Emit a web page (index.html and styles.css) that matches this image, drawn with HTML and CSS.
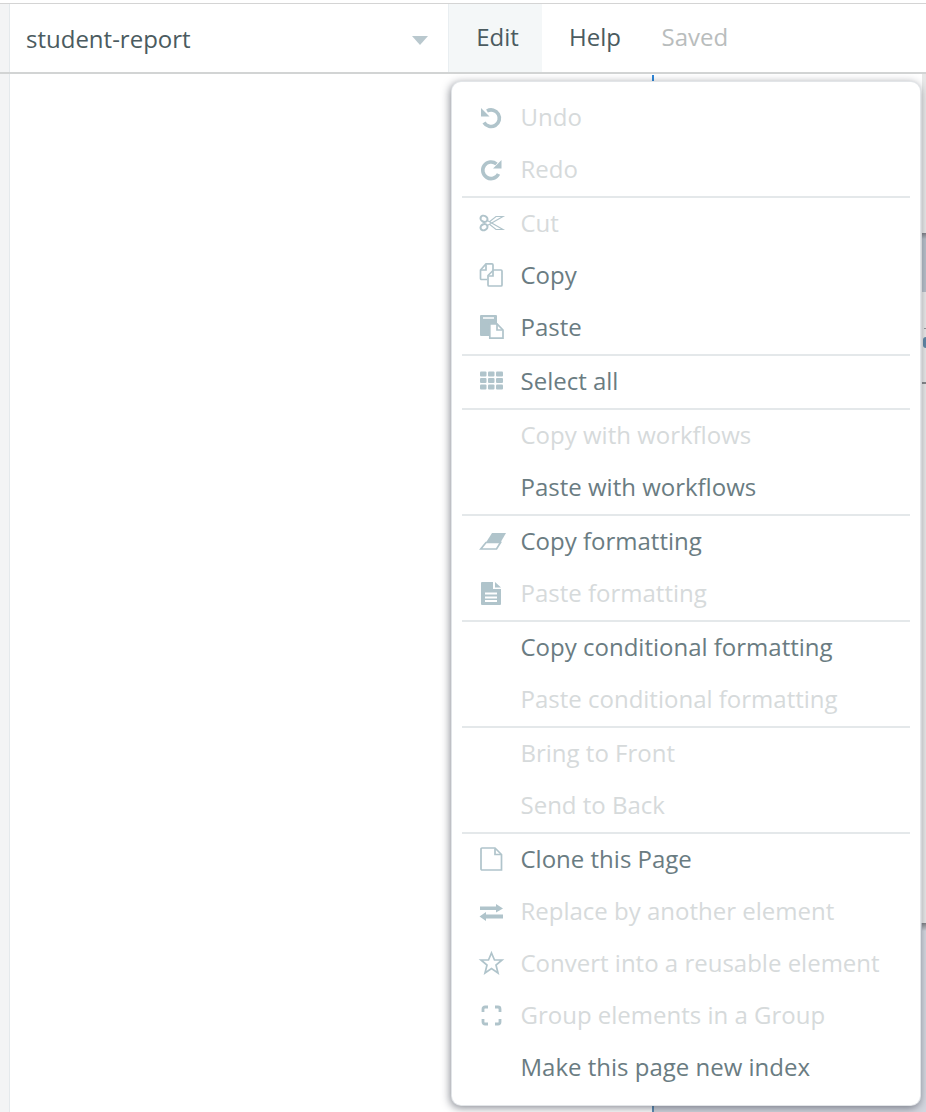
FILE: index.html
```html
<!DOCTYPE html>
<html lang="en">
<head>
<meta charset="utf-8">
<title>student-report</title>
<link rel="stylesheet" href="styles.css">
</head>
<body>
<div class="page">
  <header class="topbar">
    <div class="rail"></div>
    <div class="page-select">
      <span class="page-name">student-report</span>
      <span class="caret"></span>
    </div>
    <nav class="nav">
      <span class="nav-item nav-active">Edit</span>
      <span class="nav-item">Help</span>
      <span class="nav-saved">Saved</span>
    </nav>
  </header>
  <main class="canvas">
    <div class="rail"></div>
    <div class="guide guide-top"></div>
    <div class="lower"></div>
    <div class="guide guide-bottom"></div>
    <div class="edge">
      <div class="edge-bar"></div>
      <div class="edge-tick"></div>
      <div class="edge-dot"></div>
      <div class="edge-line"></div>
    </div>
    <div class="lower-edge"></div>
  </main>
  <div class="menu">
    <div class="row off"><svg class="ico" viewBox="0 0 24 24"><path class="st" d="M8 6A8.300 8.300 0 1 1 5 17.500"/><path class="fl" d="M2 3V11.500H10.500Z"/></svg><span>Undo</span></div>
    <div class="row off"><svg class="ico" viewBox="0 0 24 24"><path class="st" d="M17.500 7A8.300 8.300 0 1 0 19.500 17"/><path class="fl" d="M22.500 3V11.500H14Z"/></svg><span>Redo</span></div>
    <div class="sep"></div>
    <div class="row off"><svg class="ico" viewBox="0 0 24 24"><g class="ln2"><ellipse cx="5" cy="7.800" rx="3.600" ry="3" transform="rotate(25 5 7.800)"/><ellipse cx="5" cy="16.200" rx="3.600" ry="3" transform="rotate(-25 5 16.200)"/></g><path class="ln1" d="M8.300 9.500 24 18.500 17 18.500 10.500 13.200M8.300 14.500 24 5.500 17 5.500 10.500 10.800"/></svg><span>Cut</span></div>
    <div class="row"><svg class="ico" viewBox="0 0 24 24"><g class="ln"><path d="M8 16.500H2.500a1 1 0 0 1-1-1V7L7 .9H13a1 1 0 0 1 1 1V7"/><path d="M9 22V12.500L14.500 7H22a1 1 0 0 1 1 1V22a1 1 0 0 1-1 1H10a1 1 0 0 1-1-1Z"/><path d="M14 7.500V13H9.500M7 1.500V7H2"/></g></svg><span>Copy</span></div>
    <div class="row"><svg class="ico" viewBox="0 0 24 24"><path class="fl" d="M2 0H17a1 1 0 0 1 1 1V8H10V21H2a1 1 0 0 1-1-1V1A1 1 0 0 1 2 0Z"/><path class="wh" d="M4 3H15"/><path class="ln" d="M10.800 8.800H18L24 15V23.200H10.800Z"/><path class="ln" d="M18 9V15H23.500"/></svg><span>Paste</span></div>
    <div class="sep"></div>
    <div class="row"><svg class="ico" viewBox="0 0 24 24"><g class="fl"><rect x="1" y="2.500" width="6.500" height="5" rx="1"/><rect x="9" y="2.500" width="6.500" height="5" rx="1"/><rect x="17" y="2.500" width="7" height="5" rx="1"/><rect x="1" y="9" width="6.500" height="5" rx="1"/><rect x="9" y="9" width="6.500" height="5" rx="1"/><rect x="17" y="9" width="7" height="5" rx="1"/><rect x="1" y="15.500" width="6.500" height="5" rx="1"/><rect x="9" y="15.500" width="6.500" height="5" rx="1"/><rect x="17" y="15.500" width="7" height="5" rx="1"/></g></svg><span>Select all</span></div>
    <div class="sep"></div>
    <div class="row off"><span class="blank"></span><span>Copy with workflows</span></div>
    <div class="row"><span class="blank"></span><span>Paste with workflows</span></div>
    <div class="sep"></div>
    <div class="row"><svg class="ico" viewBox="0 0 24 24"><path class="fl" d="M13 4H27L21.500 13.500H7Z"/><path class="ln" d="M7 13.500H21.500L17.500 20H1.800Z"/></svg><span>Copy formatting</span></div>
    <div class="row off"><svg class="ico" viewBox="0 0 24 24"><path class="fl" fill-rule="evenodd" d="M3 1H14V8H22V23a1 1 0 0 1-1 1H3a1 1 0 0 1-1-1V2a1 1 0 0 1 1-1ZM16 1 22 6.500H16ZM6 11.500V13.500H18V11.500ZM6 15.500V17.500H18V15.500ZM6 19V21H18V19Z"/></svg><span>Paste formatting</span></div>
    <div class="sep"></div>
    <div class="row"><span class="blank"></span><span>Copy conditional formatting</span></div>
    <div class="row off"><span class="blank"></span><span>Paste conditional formatting</span></div>
    <div class="sep"></div>
    <div class="row off"><span class="blank"></span><span>Bring to Front</span></div>
    <div class="row off"><span class="blank"></span><span>Send to Back</span></div>
    <div class="sep"></div>
    <div class="row"><svg class="ico" viewBox="0 0 24 24"><g class="ln"><path d="M3 1H16L22.500 7.500V23H3a1 1 0 0 1-1-1V2A1 1 0 0 1 3 1Z"/><path d="M16 1.500V7.500H22"/></g></svg><span>Clone this Page</span></div>
    <div class="row off"><svg class="ico" viewBox="0 0 24 24"><path class="fl" d="M1 7.500H17V5L24 9.500 17 13.500V11H1ZM24 15.500H7V13L.5 17.500 7 22V19.500H24Z"/></svg><span>Replace by another element</span></div>
    <div class="row off"><svg class="ico" viewBox="0 0 24 24"><path class="ln" d="M12.500 2 15.500 9H23L17 14 19 22 12.500 17.500 6 22 8 14 2 9H9.500Z"/></svg><span>Convert into a reusable element</span></div>
    <div class="row off"><svg class="ico" viewBox="0 0 24 24"><path class="br" d="M4 9V6A2 2 0 0 1 6 4H9M16 4H19A2 2 0 0 1 21 6V9M21 16V19A2 2 0 0 1 19 21H16M9 21H6A2 2 0 0 1 4 19V16"/></svg><span>Group elements in a Group</span></div>
    <div class="row"><span class="blank"></span><span>Make this page new index</span></div>
  </div>
</div>
</body>
</html>
```
FILE: styles.css
```css
* { box-sizing: border-box; }
html, body { margin: 0; padding: 0; }
body { font-family: "Open Sans", "Liberation Sans", sans-serif; background: #fff; overflow: hidden; }
.page { position: relative; width: 926px; height: 1112px; overflow: hidden; padding-top: 3px; display: flex; flex-direction: column; }
.topbar { display: flex; height: 71px; border-top: 1px solid #d4d4d4; border-bottom: 2px solid #d2d4d4; flex: none; }
.rail { width: 10px; flex: none; background: #f3f4f5; border-right: 1px solid #e4e9ec; }
.page-select { width: 439px; display: flex; align-items: center; justify-content: space-between; padding: 0 20px 0 16px; flex: none; border-right: 1px solid #e9eef1; }
.page-name { font-size: 24px; color: #4b5b60; }
.caret { width: 0; height: 0; border-left: 8px solid transparent; border-right: 8px solid transparent; border-top: 9px solid #b9c8ce; margin-top: 5px; }
.nav { display: flex; align-items: stretch; }
.nav-item { width: 93px; display: flex; align-items: center; justify-content: center; font-size: 24px; color: #4b5b60; padding-bottom: 3px; }
.nav-item + .nav-item { width: 106px; }
.nav-active { background: #f4f7f8; padding-left: 4px; }
.nav-saved { display: flex; align-items: center; font-size: 24px; color: #b9bdbd; padding-bottom: 3px; margin-left: 13.500px; }
.canvas { flex: 1; position: relative; display: flex; }
.guide { position: absolute; left: 652px; width: 2px; background: #2c86d8; }
.guide-top { top: 1px; height: 6px; }
.guide-bottom { bottom: 0; height: 8px; background: #5b8cb5; }
.lower { position: absolute; left: 654px; right: 0; top: 849px; bottom: 0; background: #d4d7df; }
.edge { position: absolute; left: 922px; top: 0; height: 849px; width: 4px; background: #e8e8e8; }
.edge-bar { position: absolute; top: 159px; left: 0; width: 4px; height: 59px; background: linear-gradient(#7d7f85, #b6bec8 6px); }
.edge-tick { position: absolute; top: 254px; left: 2px; width: 2px; height: 1px; background: #8f9599; }
.edge-dot { position: absolute; top: 263px; left: 1px; width: 3px; height: 11px; border-radius: 3px 0 0 3px; background: #5f87a6; }
.edge-line { position: absolute; top: 308px; left: 0; width: 4px; height: 2px; background: #85878a; }
.lower-edge { position: absolute; left: 922px; top: 849px; width: 4px; height: 8px; background: linear-gradient(#7f8084, #d4d7df); }
.menu { position: absolute; left: 452px; top: 82px; width: 468px; height: 1023px; background: #fff; border-radius: 9px; padding: 10px 10px 0; box-shadow: 0 0 0 1px #e2e5e8, -1px 2px 8px 1px rgba(40, 45, 60, .55); }
.row { height: 52px; display: flex; align-items: center; font-size: 24px; color: #6a7c82; padding: 0 0 4px 17px; }
.row.off { color: #d6dadb; }
.row .ico { position: relative; top: 1px; }
.ico { width: 24px; height: 24px; flex: none; margin-right: 17.500px; overflow: visible; }
.blank { width: 24px; flex: none; margin-right: 17.500px; }
.sep { height: 2px; background: #e4e8ea; }
.st { fill: none; stroke: #b0c4cb; stroke-width: 3.600; }
.fl { fill: #b0c4cb; }
.ln { fill: none; stroke: #b0c4cb; stroke-width: 1.700; }
.ln1 { fill: none; stroke: #b0c4cb; stroke-width: 1.100; }
.ln2 { fill: none; stroke: #b0c4cb; stroke-width: 2; }
.br { fill: none; stroke: #b0c4cb; stroke-width: 2.800; }
.wh { fill: none; stroke: #fff; stroke-width: 1.500; }
```
